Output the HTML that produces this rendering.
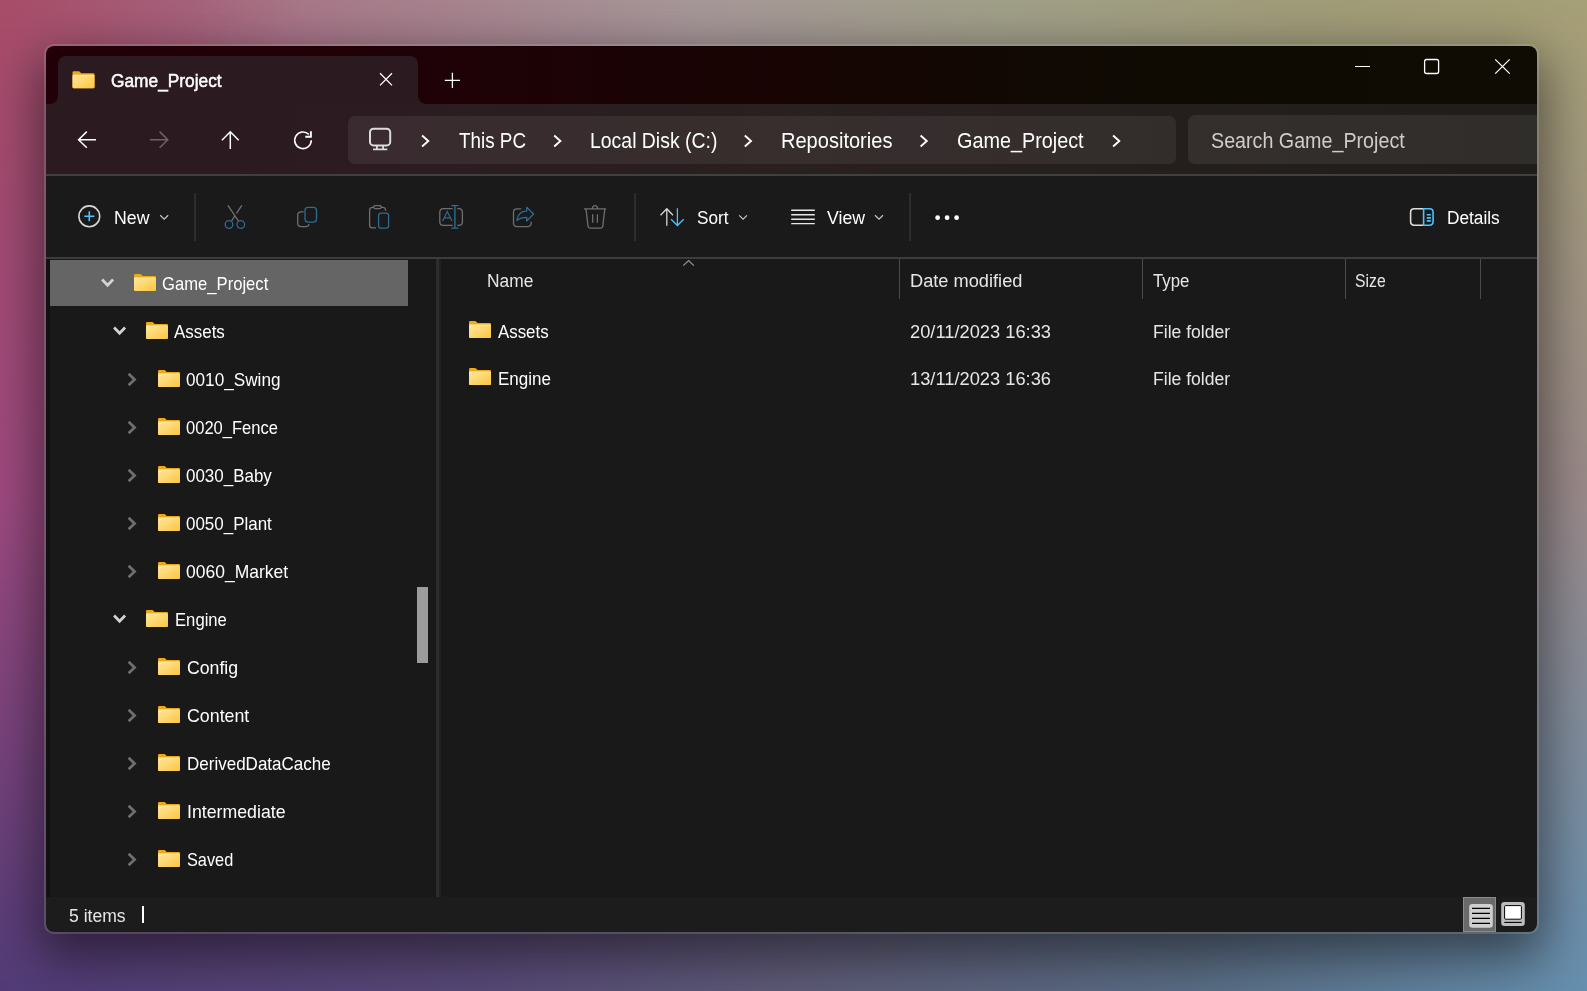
<!DOCTYPE html>
<html><head><meta charset="utf-8"><style>
html,body{margin:0;padding:0;}
body{width:1587px;height:991px;overflow:hidden;position:relative;font-family:"Liberation Sans",sans-serif;background:#5c5a80;}
.abs{position:absolute;}
.t{position:absolute;line-height:0;white-space:nowrap;transform-origin:0 0;}
.ov{position:absolute;left:0;top:0;}
#bg0{left:0;top:0;width:1587px;height:991px;background:linear-gradient(90deg,#523c78 0%,#584a78 30%,#5e5c78 50%,#5a6e86 75%,#6690b0 100%);}
#bg1{left:0;top:0;width:1587px;height:991px;background:linear-gradient(90deg,#9e4a80 0%,#8c6090 40%,#948290 70%,#9a8a8a 100%);
  -webkit-mask-image:linear-gradient(180deg,#000 0%,#000 50%,transparent 100%);mask-image:linear-gradient(180deg,#000 0%,#000 50%,transparent 100%);}
#bg2{left:0;top:0;width:1587px;height:991px;background:linear-gradient(90deg,#a84c68 0%,#a6627a 12%,#a87888 19%,#a69898 44%,#a0a088 63%,#a09c78 82%,#a6a076 100%);
  -webkit-mask-image:linear-gradient(180deg,#000 0%,transparent 50%);mask-image:linear-gradient(180deg,#000 0%,transparent 50%);}
#shadow{left:46px;top:46px;width:1490px;height:886px;border-radius:9px;box-shadow:0 18px 50px 8px rgba(0,0,0,0.5);}
#win{left:0;top:0;width:1587px;height:991px;clip-path:inset(46px 50px 59px 46px round 8px);}
#border{left:44px;top:44px;width:1495px;height:890px;box-sizing:border-box;border:2px solid rgba(210,210,210,0.20);border-radius:10px;}
</style></head><body>
<div id="bg0" class="abs"></div><div id="bg1" class="abs"></div><div id="bg2" class="abs"></div>
<div id="shadow" class="abs"></div>
<div id="win" class="abs">
  <div class="abs" style="left:0;top:0;width:1587px;height:104px;background:linear-gradient(90deg,#220008 0%,#1e0206 30%,#170403 50%,#120803 62%,#0f0b03 72%,#0e0c04 100%);"></div>
  <div class="abs" style="left:58px;top:56px;width:360px;height:48px;background:#2b1a20;border-radius:8px 8px 0 0;"></div>
  <div class="abs" style="left:50px;top:96px;width:8px;height:8px;background:radial-gradient(circle at 0 0,transparent 7.5px,#2b1a20 8.2px);"></div>
  <div class="abs" style="left:418px;top:96px;width:8px;height:8px;background:radial-gradient(circle at 100% 0,transparent 7.5px,#2b1a20 8.2px);"></div>
  <div class="abs" style="left:0;top:104px;width:1587px;height:70px;background:linear-gradient(90deg,#2b1a20 0%,#2b1c21 25%,#29201f 50%,#241f1c 75%,#1f1d19 100%);"></div>
  <div class="abs" style="left:348px;top:116px;width:828px;height:48px;border-radius:7px;background:rgba(255,255,255,0.065);"></div>
  <div class="abs" style="left:1188px;top:115px;width:400px;height:49px;border-radius:7px;background:rgba(255,255,255,0.075);"></div>
  <div class="abs" style="left:0;top:174px;width:1587px;height:2px;background:#404040;"></div>
  <div class="abs" style="left:0;top:176px;width:1587px;height:81px;background:#1a1a1a;"></div>
  <div class="abs" style="left:0;top:257px;width:1587px;height:2px;background:#3c3c3c;"></div>
  <div class="abs" style="left:0;top:259px;width:1587px;height:638px;background:#191919;"></div>
  <div class="abs" style="left:46px;top:259px;width:4px;height:638px;background:#121212;"></div>
  <div class="abs" style="left:50px;top:260px;width:358px;height:46px;background:#656565;"></div>
  <div class="abs" style="left:436px;top:259px;width:3px;height:638px;background:#2c2c2c;"></div><div class="abs" style="left:439px;top:259px;width:2px;height:638px;background:#212121;"></div>
  <div class="abs" style="left:417px;top:587px;width:11px;height:76px;background:#9c9c9c;"></div>
  <div class="abs" style="left:899px;top:259px;width:1px;height:40px;background:#4a4a4a;"></div>
  <div class="abs" style="left:1142px;top:259px;width:1px;height:40px;background:#4a4a4a;"></div>
  <div class="abs" style="left:1345px;top:259px;width:1px;height:40px;background:#4a4a4a;"></div>
  <div class="abs" style="left:1480px;top:259px;width:1px;height:40px;background:#4a4a4a;"></div>
  <div class="abs" style="left:0;top:897px;width:1587px;height:40px;background:#1c1c1c;"></div>
  <div class="abs" style="left:142px;top:906px;width:2px;height:17px;background:#fff;"></div>
  <svg class="ov" width="1587" height="991" viewBox="0 0 1587 991"><defs><linearGradient id="fg" x1="0" y1="0" x2="1" y2="1"><stop offset="0" stop-color="#ffe7a0"/><stop offset="1" stop-color="#fcc63e"/></linearGradient></defs><g transform="translate(134.0,273.9) scale(1.0)"><path d="M0 1.2Q0 0 1.2 0H6.0Q6.6 0 7.0 0.4L8.7 2.0H20.8Q22 2.0 22 3.2V15.8Q22 17 20.8 17H1.2Q0 17 0 15.8Z" fill="#eeaa14"/><rect x="0" y="3.6" width="22" height="13.4" rx="1.1" fill="url(#fg)"/><rect x="0.6" y="3.6" width="20.8" height="0.9" fill="#fff2c0" opacity="0.55"/></g><path d="M102.10000000000001 279.5L107.60000000000001 285.2L113.10000000000001 279.5" stroke="#d4d4d4" stroke-width="2.7" fill="none"/><g transform="translate(146.0,321.9) scale(1.0)"><path d="M0 1.2Q0 0 1.2 0H6.0Q6.6 0 7.0 0.4L8.7 2.0H20.8Q22 2.0 22 3.2V15.8Q22 17 20.8 17H1.2Q0 17 0 15.8Z" fill="#eeaa14"/><rect x="0" y="3.6" width="22" height="13.4" rx="1.1" fill="url(#fg)"/><rect x="0.6" y="3.6" width="20.8" height="0.9" fill="#fff2c0" opacity="0.55"/></g><path d="M114.10000000000001 327.5L119.60000000000001 333.2L125.10000000000001 327.5" stroke="#d4d4d4" stroke-width="2.7" fill="none"/><g transform="translate(158.0,369.9) scale(1.0)"><path d="M0 1.2Q0 0 1.2 0H6.0Q6.6 0 7.0 0.4L8.7 2.0H20.8Q22 2.0 22 3.2V15.8Q22 17 20.8 17H1.2Q0 17 0 15.8Z" fill="#eeaa14"/><rect x="0" y="3.6" width="22" height="13.4" rx="1.1" fill="url(#fg)"/><rect x="0.6" y="3.6" width="20.8" height="0.9" fill="#fff2c0" opacity="0.55"/></g><path d="M128.6 373.7L134.6 379.5L128.6 385.3" stroke="#707070" stroke-width="2.7" fill="none"/><g transform="translate(158.0,417.9) scale(1.0)"><path d="M0 1.2Q0 0 1.2 0H6.0Q6.6 0 7.0 0.4L8.7 2.0H20.8Q22 2.0 22 3.2V15.8Q22 17 20.8 17H1.2Q0 17 0 15.8Z" fill="#eeaa14"/><rect x="0" y="3.6" width="22" height="13.4" rx="1.1" fill="url(#fg)"/><rect x="0.6" y="3.6" width="20.8" height="0.9" fill="#fff2c0" opacity="0.55"/></g><path d="M128.6 421.7L134.6 427.5L128.6 433.3" stroke="#707070" stroke-width="2.7" fill="none"/><g transform="translate(158.0,465.9) scale(1.0)"><path d="M0 1.2Q0 0 1.2 0H6.0Q6.6 0 7.0 0.4L8.7 2.0H20.8Q22 2.0 22 3.2V15.8Q22 17 20.8 17H1.2Q0 17 0 15.8Z" fill="#eeaa14"/><rect x="0" y="3.6" width="22" height="13.4" rx="1.1" fill="url(#fg)"/><rect x="0.6" y="3.6" width="20.8" height="0.9" fill="#fff2c0" opacity="0.55"/></g><path d="M128.6 469.7L134.6 475.5L128.6 481.3" stroke="#707070" stroke-width="2.7" fill="none"/><g transform="translate(158.0,513.9) scale(1.0)"><path d="M0 1.2Q0 0 1.2 0H6.0Q6.6 0 7.0 0.4L8.7 2.0H20.8Q22 2.0 22 3.2V15.8Q22 17 20.8 17H1.2Q0 17 0 15.8Z" fill="#eeaa14"/><rect x="0" y="3.6" width="22" height="13.4" rx="1.1" fill="url(#fg)"/><rect x="0.6" y="3.6" width="20.8" height="0.9" fill="#fff2c0" opacity="0.55"/></g><path d="M128.6 517.7L134.6 523.5L128.6 529.3" stroke="#707070" stroke-width="2.7" fill="none"/><g transform="translate(158.0,561.9) scale(1.0)"><path d="M0 1.2Q0 0 1.2 0H6.0Q6.6 0 7.0 0.4L8.7 2.0H20.8Q22 2.0 22 3.2V15.8Q22 17 20.8 17H1.2Q0 17 0 15.8Z" fill="#eeaa14"/><rect x="0" y="3.6" width="22" height="13.4" rx="1.1" fill="url(#fg)"/><rect x="0.6" y="3.6" width="20.8" height="0.9" fill="#fff2c0" opacity="0.55"/></g><path d="M128.6 565.7L134.6 571.5L128.6 577.3" stroke="#707070" stroke-width="2.7" fill="none"/><g transform="translate(146.0,609.9) scale(1.0)"><path d="M0 1.2Q0 0 1.2 0H6.0Q6.6 0 7.0 0.4L8.7 2.0H20.8Q22 2.0 22 3.2V15.8Q22 17 20.8 17H1.2Q0 17 0 15.8Z" fill="#eeaa14"/><rect x="0" y="3.6" width="22" height="13.4" rx="1.1" fill="url(#fg)"/><rect x="0.6" y="3.6" width="20.8" height="0.9" fill="#fff2c0" opacity="0.55"/></g><path d="M114.10000000000001 615.5L119.60000000000001 621.2L125.10000000000001 615.5" stroke="#d4d4d4" stroke-width="2.7" fill="none"/><g transform="translate(158.0,657.9) scale(1.0)"><path d="M0 1.2Q0 0 1.2 0H6.0Q6.6 0 7.0 0.4L8.7 2.0H20.8Q22 2.0 22 3.2V15.8Q22 17 20.8 17H1.2Q0 17 0 15.8Z" fill="#eeaa14"/><rect x="0" y="3.6" width="22" height="13.4" rx="1.1" fill="url(#fg)"/><rect x="0.6" y="3.6" width="20.8" height="0.9" fill="#fff2c0" opacity="0.55"/></g><path d="M128.6 661.7L134.6 667.5L128.6 673.3" stroke="#707070" stroke-width="2.7" fill="none"/><g transform="translate(158.0,705.9) scale(1.0)"><path d="M0 1.2Q0 0 1.2 0H6.0Q6.6 0 7.0 0.4L8.7 2.0H20.8Q22 2.0 22 3.2V15.8Q22 17 20.8 17H1.2Q0 17 0 15.8Z" fill="#eeaa14"/><rect x="0" y="3.6" width="22" height="13.4" rx="1.1" fill="url(#fg)"/><rect x="0.6" y="3.6" width="20.8" height="0.9" fill="#fff2c0" opacity="0.55"/></g><path d="M128.6 709.7L134.6 715.5L128.6 721.3" stroke="#707070" stroke-width="2.7" fill="none"/><g transform="translate(158.0,753.9) scale(1.0)"><path d="M0 1.2Q0 0 1.2 0H6.0Q6.6 0 7.0 0.4L8.7 2.0H20.8Q22 2.0 22 3.2V15.8Q22 17 20.8 17H1.2Q0 17 0 15.8Z" fill="#eeaa14"/><rect x="0" y="3.6" width="22" height="13.4" rx="1.1" fill="url(#fg)"/><rect x="0.6" y="3.6" width="20.8" height="0.9" fill="#fff2c0" opacity="0.55"/></g><path d="M128.6 757.7L134.6 763.5L128.6 769.3" stroke="#707070" stroke-width="2.7" fill="none"/><g transform="translate(158.0,801.9) scale(1.0)"><path d="M0 1.2Q0 0 1.2 0H6.0Q6.6 0 7.0 0.4L8.7 2.0H20.8Q22 2.0 22 3.2V15.8Q22 17 20.8 17H1.2Q0 17 0 15.8Z" fill="#eeaa14"/><rect x="0" y="3.6" width="22" height="13.4" rx="1.1" fill="url(#fg)"/><rect x="0.6" y="3.6" width="20.8" height="0.9" fill="#fff2c0" opacity="0.55"/></g><path d="M128.6 805.7L134.6 811.5L128.6 817.3" stroke="#707070" stroke-width="2.7" fill="none"/><g transform="translate(158.0,849.9) scale(1.0)"><path d="M0 1.2Q0 0 1.2 0H6.0Q6.6 0 7.0 0.4L8.7 2.0H20.8Q22 2.0 22 3.2V15.8Q22 17 20.8 17H1.2Q0 17 0 15.8Z" fill="#eeaa14"/><rect x="0" y="3.6" width="22" height="13.4" rx="1.1" fill="url(#fg)"/><rect x="0.6" y="3.6" width="20.8" height="0.9" fill="#fff2c0" opacity="0.55"/></g><path d="M128.6 853.7L134.6 859.5L128.6 865.3" stroke="#707070" stroke-width="2.7" fill="none"/><g transform="translate(469,321) scale(1.0)"><path d="M0 1.2Q0 0 1.2 0H6.0Q6.6 0 7.0 0.4L8.7 2.0H20.8Q22 2.0 22 3.2V15.8Q22 17 20.8 17H1.2Q0 17 0 15.8Z" fill="#eeaa14"/><rect x="0" y="3.6" width="22" height="13.4" rx="1.1" fill="url(#fg)"/><rect x="0.6" y="3.6" width="20.8" height="0.9" fill="#fff2c0" opacity="0.55"/></g><g transform="translate(469,368) scale(1.0)"><path d="M0 1.2Q0 0 1.2 0H6.0Q6.6 0 7.0 0.4L8.7 2.0H20.8Q22 2.0 22 3.2V15.8Q22 17 20.8 17H1.2Q0 17 0 15.8Z" fill="#eeaa14"/><rect x="0" y="3.6" width="22" height="13.4" rx="1.1" fill="url(#fg)"/><rect x="0.6" y="3.6" width="20.8" height="0.9" fill="#fff2c0" opacity="0.55"/></g><g transform="translate(72.5,71.2) scale(1.0)"><path d="M0 1.2Q0 0 1.2 0H6.0Q6.6 0 7.0 0.4L8.7 2.0H20.8Q22 2.0 22 3.2V15.8Q22 17 20.8 17H1.2Q0 17 0 15.8Z" fill="#eeaa14"/><rect x="0" y="3.6" width="22" height="13.4" rx="1.1" fill="url(#fg)"/><rect x="0.6" y="3.6" width="20.8" height="0.9" fill="#fff2c0" opacity="0.55"/></g><path d="M380 73.3L392 85.4M392 73.3L380 85.4" stroke="#ffffff" stroke-width="1.3"/><path d="M444.8 80.4H460M452.4 72.8V88" stroke="#ffffff" stroke-width="1.3"/><path d="M1355 66.5H1370" stroke="#ffffff" stroke-width="1.2"/><rect x="1424.6" y="59.5" width="14" height="14" rx="2" stroke="#ffffff" stroke-width="1.3" fill="none"/><path d="M1495.2 59.4L1509.7 73.6M1509.7 59.4L1495.2 73.6" stroke="#ffffff" stroke-width="1.3"/><path d="M96 139.7H78.8M86.8 131.6L78.6 139.7L86.8 147.8" stroke="#ffffff" stroke-width="1.5" fill="none"/><path d="M150 139.7H167.6M159.6 131.6L167.8 139.7L159.6 147.8" stroke="#6f6367" stroke-width="1.5" fill="none"/><path d="M230.3 149V131.8M221.9 140.2L230.3 131.8L238.7 140.2" stroke="#ffffff" stroke-width="1.5" fill="none"/><path d="M311.3 140.3A8.3 8.3 0 1 1 308.9 134.4" stroke="#ffffff" stroke-width="1.6" fill="none"/><path d="M310.9 131.2V136.8H305.3" stroke="#ffffff" stroke-width="1.9" fill="none"/><rect x="370" y="128.8" width="20.2" height="16.6" rx="3.5" stroke="#dcdcdc" stroke-width="2" fill="none"/><path d="M376.9 145.5V149M383.1 145.5V149M373 149.3H387.3" stroke="#dcdcdc" stroke-width="1.8" fill="none"/><path d="M422.1 135.5L428.3 141L422.1 146.5" stroke="#ffffff" stroke-width="1.9" fill="none"/><path d="M554.2 135.5L560.4000000000001 141L554.2 146.5" stroke="#ffffff" stroke-width="1.9" fill="none"/><path d="M744.8 135.5L751.0 141L744.8 146.5" stroke="#ffffff" stroke-width="1.9" fill="none"/><path d="M920.6 135.5L926.8000000000001 141L920.6 146.5" stroke="#ffffff" stroke-width="1.9" fill="none"/><path d="M1113.1 135.5L1119.3 141L1113.1 146.5" stroke="#ffffff" stroke-width="1.9" fill="none"/><circle cx="89.3" cy="216.3" r="10.4" stroke="#d6d6d6" stroke-width="1.6" fill="none"/><path d="M89.3 211.3V221.3M84.3 216.3H94.3" stroke="#4cc2ff" stroke-width="1.6"/><path d="M160.2 215.3L164.2 219.2L168.2 215.3" stroke="#c8c8c8" stroke-width="1.2" fill="none"/><rect x="194.5" y="193" width="1.2" height="48" fill="#3a3a3a"/><rect x="634.5" y="193" width="1.2" height="48" fill="#3a3a3a"/><rect x="909.5" y="193" width="1.2" height="48" fill="#3a3a3a"/><path d="M227.9 205.3L238.4 220.8M241.8 205.3L236.5 213.4M235.0 215.6L231.6 220.8" stroke="#6f6f6f" stroke-width="1.3" fill="none"/><circle cx="229" cy="224.5" r="3.8" stroke="#2e6c90" stroke-width="1.3" fill="none"/><circle cx="240.8" cy="224.5" r="3.8" stroke="#2e6c90" stroke-width="1.3" fill="none"/><path d="M303.6 211.8H301.2Q297.7 211.8 297.7 215.3V223.2Q297.7 226.6 301.2 226.6H305.8Q308.6 226.6 309.1 224.2" stroke="#6f6f6f" stroke-width="1.3" fill="none"/><rect x="305.0" y="207.3" width="11.5" height="14.8" rx="3" stroke="#2e6c90" stroke-width="1.3" fill="none"/><path d="M376 227.9H372.5Q369.6 227.9 369.6 225V210.3Q369.6 207.4 372.5 207.4H374M381 207.4H382.7Q385.6 207.4 385.6 210.3V210.8" stroke="#6f6f6f" stroke-width="1.3" fill="none"/><rect x="373.6" y="205.6" width="7.7" height="3.0" rx="1.5" stroke="#6f6f6f" stroke-width="1.3" fill="none"/><rect x="378.6" y="213.1" width="10" height="15" rx="2.4" stroke="#2e6c90" stroke-width="1.3" fill="none"/><path d="M452.6 208.7H443.5Q439.8 208.7 439.8 212.4V221.7Q439.8 225.4 443.5 225.4H452.6M457.3 208.7H458.7Q462.4 208.7 462.4 212.4V221.7Q462.4 225.4 458.7 225.4H457.3" stroke="#6f6f6f" stroke-width="1.3" fill="none"/><path d="M454.9 205.6V228.1M451.3 205.6H458.4M451.3 228.1H458.4" stroke="#2e6c90" stroke-width="1.4" fill="none"/><path d="M442.6 221L447.3 211.6L452 221M444.2 217.9H450.4" stroke="#2e6c90" stroke-width="1.2" fill="none"/><path d="M521.2 208.8H517Q513.5 208.8 513.5 212.3V223.1Q513.5 226.6 517 226.6H527.6Q531.2 226.6 531.2 223.1V221.8" stroke="#6f6f6f" stroke-width="1.3" fill="none"/><path d="M526.7 207.2V211.1Q520.5 211.2 518.4 215.8Q517.2 218.3 517 220.6Q520.2 217.3 526.7 217.3V221.0L533.6 214.0Z" stroke="#2e6c90" stroke-width="1.3" fill="none" stroke-linejoin="round"/><path d="M584 208.8H606M586 209.2L588 226Q588.3 228.2 590.5 228.2H600.3Q602.5 228.2 602.8 226L604.8 209.2M592.3 208.6Q592.5 205.6 595 205.6Q597.5 205.6 597.7 208.6M592.7 214.3V222.8M597.4 214.3V222.8" stroke="#6f6f6f" stroke-width="1.3" fill="none"/><path d="M666.8 225.8V208.8M660.5 215.2L666.8 208.8L673 215.2" stroke="#d6d6d6" stroke-width="1.3" fill="none"/><path d="M677.4 208.3V225.2M671.1 219.2L677.4 225.5L683.7 219.2" stroke="#4cc2ff" stroke-width="1.3" fill="none"/><path d="M739.2 215.3L743.1 219.2L747 215.3" stroke="#c8c8c8" stroke-width="1.2" fill="none"/><path d="M791.2 210.3H814.8M791.2 214.7H814.8M791.2 219.2H814.8M791.2 223.6H814.8" stroke="#e8e8e8" stroke-width="1.4" fill="none"/><path d="M875 215.3L879 219.2L883 215.3" stroke="#c8c8c8" stroke-width="1.2" fill="none"/><circle cx="937.6" cy="217.7" r="2.4" fill="#fff"/><circle cx="947.1" cy="217.7" r="2.4" fill="#fff"/><circle cx="956.6" cy="217.7" r="2.4" fill="#fff"/><path d="M1423.6 208.8H1414.2Q1410.6 208.8 1410.6 212.4V221.6Q1410.6 225.2 1414.2 225.2H1423.6" stroke="#dedede" stroke-width="1.6" fill="none"/><path d="M1423.6 208.8H1429.5Q1433.1 208.8 1433.1 212.4V221.6Q1433.1 225.2 1429.5 225.2H1423.6Z M1426.8 214.8H1430.8M1426.8 217.9H1430.8M1426.8 220.9H1430.8" stroke="#4cc2ff" stroke-width="1.6" fill="none"/><path d="M683.3 265.7L688.6 260.6L693.9 265.7" stroke="#9a9a9a" stroke-width="1.1" fill="none"/><rect x="1463.5" y="897.5" width="32" height="34" fill="#6a6a6a" stroke="#8c8c8c" stroke-width="1"/><rect x="1469.2" y="903.9" width="23.6" height="23.8" rx="3.2" fill="#cfcfcf"/><path d="M1472 908.4H1490M1472 913.4H1490M1472 918.4H1490M1472 923.4H1490" stroke="#000" stroke-width="1.1"/><rect x="1501.2" y="902.1" width="23.6" height="23.8" rx="3.2" fill="#bdbdbd"/><rect x="1504.6" y="905.6" width="16.8" height="13.6" rx="1" fill="#fff" stroke="#000" stroke-width="1"/><path d="M1504.3 922.4H1521.7" stroke="#000" stroke-width="1.1"/></svg>
<div class="t" style="left:111.40px;top:80.83px;font-size:17.8px;color:#fff;transform:scaleX(0.9738);-webkit-text-stroke:0.5px #fff;">Game_Project</div>
<div class="t" style="left:459.20px;top:140.55px;font-size:21.5px;color:#fff;transform:scaleX(0.8760);">This PC</div>
<div class="t" style="left:589.70px;top:140.55px;font-size:21.5px;color:#fff;transform:scaleX(0.9036);">Local Disk (C:)</div>
<div class="t" style="left:781.20px;top:140.55px;font-size:21.5px;color:#fff;transform:scaleX(0.9323);">Repositories</div>
<div class="t" style="left:956.50px;top:140.55px;font-size:21.5px;color:#fff;transform:scaleX(0.9211);">Game_Project</div>
<div class="t" style="left:1211.30px;top:140.55px;font-size:21.5px;color:#cfcdc9;transform:scaleX(0.9158);">Search Game_Project</div>
<div class="t" style="left:114.40px;top:218.09px;font-size:18.8px;color:#fff;transform:scaleX(0.9430);">New</div>
<div class="t" style="left:696.70px;top:218.09px;font-size:18.8px;color:#fff;transform:scaleX(0.9131);">Sort</div>
<div class="t" style="left:827.00px;top:218.09px;font-size:18.8px;color:#fff;transform:scaleX(0.9415);">View</div>
<div class="t" style="left:1446.70px;top:218.09px;font-size:18.8px;color:#fff;transform:scaleX(0.9186);">Details</div>
<div class="t" style="left:486.50px;top:281.19px;font-size:18.8px;color:#e6e6e6;transform:scaleX(0.9252);">Name</div>
<div class="t" style="left:909.80px;top:281.19px;font-size:18.8px;color:#e6e6e6;transform:scaleX(0.9699);">Date modified</div>
<div class="t" style="left:1152.50px;top:281.19px;font-size:18.8px;color:#e6e6e6;transform:scaleX(0.8933);">Type</div>
<div class="t" style="left:1355.30px;top:281.19px;font-size:18.8px;color:#e6e6e6;transform:scaleX(0.8396);">Size</div>
<div class="t" style="left:498.00px;top:331.69px;font-size:18.8px;color:#fff;transform:scaleX(0.8972);">Assets</div>
<div class="t" style="left:909.80px;top:331.69px;font-size:18.8px;color:#e6e6e6;transform:scaleX(0.9738);">20/11/2023 16:33</div>
<div class="t" style="left:1152.50px;top:331.69px;font-size:18.8px;color:#e6e6e6;transform:scaleX(0.9354);">File folder</div>
<div class="t" style="left:498.00px;top:378.69px;font-size:18.8px;color:#fff;transform:scaleX(0.9050);">Engine</div>
<div class="t" style="left:909.80px;top:378.69px;font-size:18.8px;color:#e6e6e6;transform:scaleX(0.9738);">13/11/2023 16:36</div>
<div class="t" style="left:1152.50px;top:378.69px;font-size:18.8px;color:#e6e6e6;transform:scaleX(0.9354);">File folder</div>
<div class="t" style="left:68.80px;top:916.09px;font-size:18.8px;color:#e6e6e6;transform:scaleX(0.9359);">5 items</div>
<div class="t" style="left:162.40px;top:283.59px;font-size:18.5px;color:#fff;transform:scaleX(0.8989);">Game_Project</div>
<div class="t" style="left:174.00px;top:331.59px;font-size:18.5px;color:#fff;transform:scaleX(0.9153);">Assets</div>
<div class="t" style="left:186.10px;top:379.59px;font-size:18.5px;color:#fff;transform:scaleX(0.9279);">0010_Swing</div>
<div class="t" style="left:186.10px;top:427.59px;font-size:18.5px;color:#fff;transform:scaleX(0.8944);">0020_Fence</div>
<div class="t" style="left:186.10px;top:475.59px;font-size:18.5px;color:#fff;transform:scaleX(0.9166);">0030_Baby</div>
<div class="t" style="left:186.10px;top:523.59px;font-size:18.5px;color:#fff;transform:scaleX(0.9166);">0050_Plant</div>
<div class="t" style="left:186.10px;top:571.59px;font-size:18.5px;color:#fff;transform:scaleX(0.9454);">0060_Market</div>
<div class="t" style="left:174.80px;top:619.59px;font-size:18.5px;color:#fff;transform:scaleX(0.9006);">Engine</div>
<div class="t" style="left:186.70px;top:667.59px;font-size:18.5px;color:#fff;transform:scaleX(0.9558);">Config</div>
<div class="t" style="left:186.70px;top:715.59px;font-size:18.5px;color:#fff;transform:scaleX(0.9615);">Content</div>
<div class="t" style="left:187.10px;top:763.59px;font-size:18.5px;color:#fff;transform:scaleX(0.9192);">DerivedDataCache</div>
<div class="t" style="left:187.10px;top:811.59px;font-size:18.5px;color:#fff;transform:scaleX(0.9586);">Intermediate</div>
<div class="t" style="left:187.00px;top:859.59px;font-size:18.5px;color:#fff;transform:scaleX(0.8809);">Saved</div>

</div>
<div id="border" class="abs"></div>
</body></html>
